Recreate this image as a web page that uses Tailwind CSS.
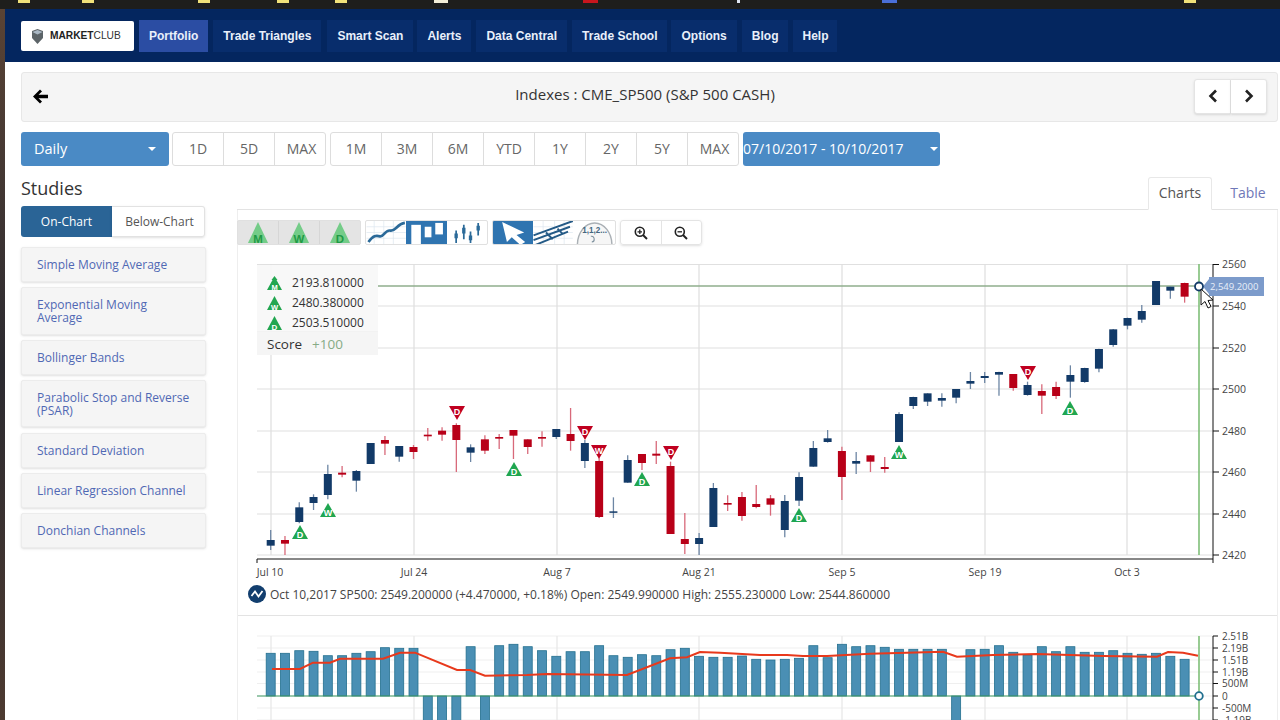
<!DOCTYPE html>
<html lang="en">
<head>
    <meta charset="UTF-8">
    <title>MarketClub Chart</title>
    <script src="https://cdn.jsdelivr.net/npm/@tailwindcss/browser@4"></script>
</head>
<body class="bg-white">
<div class="w-[1280px] h-[720px] overflow-hidden flex flex-col font-['Open_Sans',sans-serif] text-[#444]">
    <!-- browser bookmarks strip -->
    <div class="h-[9px] shrink-0 bg-[#1e1e1c] flex items-start">
        <span class="ml-[18px] w-[12px] h-[3px] bg-[#f1e27a]"></span>
        <span class="ml-[52px] w-[12px] h-[3px] bg-[#f1e27a]"></span>
        <span class="ml-[104px] w-[12px] h-[3px] bg-[#f1e27a]"></span>
        <span class="ml-[67px] w-[12px] h-[3px] bg-[#f1e27a]"></span>
        <span class="ml-[46px] w-[12px] h-[3px] bg-[#f1e27a]"></span>
        <span class="ml-[87px] w-[14px] h-[3px] bg-[#f4efd8]"></span>
        <span class="ml-[135px] w-[15px] h-[3px] bg-[#c8161d]"></span>
        <span class="ml-[139px] w-[3px] h-[3px] bg-[#dfe6f2]"></span>
        <span class="ml-[142px] w-[15px] h-[3px] bg-[#4a6fd8]"></span>
        <span class="ml-[287px] w-[12px] h-[3px] bg-[#f1e27a]"></span>
    </div>
    <div class="flex flex-1 min-h-0">
        <div class="w-[5px] shrink-0 bg-gradient-to-b from-[#5a4334] via-[#2b2a30] to-[#4d3a30]"></div>
        <div class="flex-1 min-w-0">
            <!-- Navigation -->
            <nav class="h-[53px] bg-[#04265f] flex items-center pl-[16px] pt-[1px] font-['Liberation_Sans',sans-serif] text-[12px] font-bold text-[#e9f0fb]">
                <div class="w-[113px] h-[30px] bg-white rounded-[2px] flex items-center pl-[10px] mr-[5px]">
                    <svg class="w-[13px] h-[15px]" viewBox="0 0 13 15"><path d="M1 2 L6.5 0 L12 2 L12 9 L6.5 15 L1 9 Z" fill="#5c6468"/><path d="M1.5 3 L6.5 1 L11.5 3 L6.5 5.5 Z" fill="#a9b7c4"/></svg>
                    <span class="ml-[6px] text-[10.200px] text-[#222]">MARKET<span class="font-normal text-[#333]">CLUB</span></span>
                </div>
                <a class="h-[32px] px-[10px] flex items-center bg-[#2b4da3]">Portfolio</a>
                <a class="h-[32px] px-[10px] ml-[5px] flex items-center bg-[#082d6c]">Trade Triangles</a>
                <a class="h-[32px] px-[10px] ml-[6px] flex items-center bg-[#082d6c]">Smart Scan</a>
                <a class="h-[32px] px-[10px] ml-[4px] flex items-center bg-[#082d6c]">Alerts</a>
                <a class="h-[32px] px-[10px] ml-[5px] flex items-center bg-[#082d6c]">Data Central</a>
                <a class="h-[32px] px-[10px] ml-[5px] flex items-center bg-[#082d6c]">Trade School</a>
                <a class="h-[32px] px-[10px] ml-[4px] flex items-center bg-[#082d6c]">Options</a>
                <a class="h-[32px] px-[10px] ml-[5px] flex items-center bg-[#082d6c]">Blog</a>
                <a class="h-[32px] px-[9px] ml-[5px] flex items-center bg-[#082d6c]">Help</a>
            </nav>

            <div class="pl-[16px] pr-[2px]">
                <!-- Title panel -->
                <div class="mt-[10px] h-[50px] bg-[#f5f5f5] border border-[#e7e7e7] rounded-[3px] flex items-center relative pr-[10px]">
                    <svg class="ml-[10px] mb-[2px] w-[17px] h-[15px]" viewBox="0 0 17 15"><path d="M8 0.5 L1 7.5 L8 14.5 L10 12.5 L6.5 9.3 L16 9.3 L16 5.7 L6.5 5.7 L10 2.5 Z" fill="#000"/></svg>
                    <h1 class="flex-1 text-center text-[15px] text-[#333] mb-[6px] pl-[51px] pr-[4px]">Indexes : CME_SP500 (S&amp;P 500 CASH)</h1>
                    <div class="flex mb-[2px]">
                        <button class="w-[37px] h-[35px] bg-white border border-[#e4e4e4] rounded-l-[3px] flex items-center justify-center shadow-sm">
                            <svg class="w-[10px] h-[14px]" viewBox="0 0 10 14"><path d="M8 1.5 L2.5 7 L8 12.5" fill="none" stroke="#222" stroke-width="2.6"/></svg>
                        </button>
                        <button class="w-[36px] h-[35px] bg-white border border-[#e4e4e4] border-l-0 rounded-r-[3px] flex items-center justify-center shadow-sm">
                            <svg class="w-[10px] h-[14px]" viewBox="0 0 10 14"><path d="M2 1.5 L7.5 7 L2 12.5" fill="none" stroke="#222" stroke-width="2.6"/></svg>
                        </button>
                    </div>
                </div>

                <!-- Range controls -->
                <div class="mt-[10px] h-[34px] flex text-[14px] text-[#666]">
                    <button class="w-[148px] bg-[#4a8ac5] text-white rounded-[3px] flex items-center pl-[13px] pr-[13px] pb-[1px] justify-between text-[14.5px]">Daily<span class="w-0 h-0 border-x-[4px] border-x-transparent border-t-[4px] border-t-white"></span></button>
                    <div class="ml-[3px] flex border border-[#ddd] rounded-[3px] divide-x divide-[#ddd]">
                        <span class="w-[51px] pb-[1px] flex items-center justify-center">1D</span>
                        <span class="w-[51px] pb-[1px] flex items-center justify-center">5D</span>
                        <span class="w-[50px] pb-[1px] pl-[3px] flex items-center justify-center">MAX</span>
                    </div>
                    <div class="ml-[4px] flex border border-[#ddd] rounded-[3px] divide-x divide-[#ddd]">
                        <span class="w-[51px] pb-[1px] flex items-center justify-center">1M</span>
                        <span class="w-[51px] pb-[1px] flex items-center justify-center">3M</span>
                        <span class="w-[51px] pb-[1px] flex items-center justify-center">6M</span>
                        <span class="w-[51px] pb-[1px] flex items-center justify-center">YTD</span>
                        <span class="w-[51px] pb-[1px] flex items-center justify-center">1Y</span>
                        <span class="w-[51px] pb-[1px] flex items-center justify-center">2Y</span>
                        <span class="w-[51px] pb-[1px] flex items-center justify-center">5Y</span>
                        <span class="w-[50px] pb-[1px] pl-[3px] flex items-center justify-center">MAX</span>
                    </div>
                    <button class="ml-[4px] w-[197px] bg-[#4a8ac5] text-white rounded-[3px] flex items-center justify-between pr-[2px] pb-[1px] text-[14px]">07/10/2017 - 10/10/2017<span class="w-0 h-0 border-x-[4px] border-x-transparent border-t-[4px] border-t-white"></span></button>
                </div>

                <div class="mt-[11px] flex">
                    <!-- Studies -->
                    <aside class="w-[185px] shrink-0">
                        <h2 class="h-[22px] leading-[22px] text-[18px] text-[#333]">Studies</h2>
                        <div class="mt-[7px] w-[184px] h-[31px] flex text-[12px] rounded-[3px]">
                            <span class="w-[91px] bg-[#2a6496] text-white rounded-l-[3px] flex items-center justify-center">On-Chart</span>
                            <span class="flex-1 pl-[3px] border border-[#e2e2e2] border-l-0 rounded-r-[3px] flex items-center justify-center text-[#555] shadow-sm">Below-Chart</span>
                        </div>
                        <div class="mt-[10px] flex flex-col gap-[5px] text-[12px] leading-[13px] font-medium text-[#5068b4]">
                            <a class="h-[35px] pl-[15px] pr-[12px] flex items-center bg-[#f5f5f5] border border-[#ececec] rounded-[2px] shadow-sm">Simple Moving Average</a>
                            <a class="h-[48px] pl-[15px] pr-[12px] flex items-center bg-[#f5f5f5] border border-[#ececec] rounded-[2px] shadow-sm">Exponential Moving Average</a>
                            <a class="h-[35px] pl-[15px] pr-[12px] flex items-center bg-[#f5f5f5] border border-[#ececec] rounded-[2px] shadow-sm">Bollinger Bands</a>
                            <a class="h-[47px] mb-[1px] pl-[15px] pr-[12px] flex items-center bg-[#f5f5f5] border border-[#ececec] rounded-[2px] shadow-sm">Parabolic Stop and Reverse (PSAR)</a>
                            <a class="h-[35px] pl-[15px] pr-[12px] flex items-center bg-[#f5f5f5] border border-[#ececec] rounded-[2px] shadow-sm">Standard Deviation</a>
                            <a class="h-[35px] pl-[15px] pr-[12px] flex items-center bg-[#f5f5f5] border border-[#ececec] rounded-[2px] shadow-sm">Linear Regression Channel</a>
                            <a class="h-[35px] pl-[15px] pr-[12px] flex items-center bg-[#f5f5f5] border border-[#ececec] rounded-[2px] shadow-sm">Donchian Channels</a>
                        </div>
                    </aside>

                    <!-- Chart pane -->
                    <section class="ml-[31px] w-[1041px] shrink-0">
                        <div class="h-[33px] flex justify-end border-b border-[#e3e3e3] text-[14px]">
                            <span class="w-[64px] h-[33px] pb-[2px] border border-[#e8e8e8] border-b-white rounded-t-[3px] flex items-center justify-center text-[#555] bg-white">Charts</span>
                            <span class="w-[66px] pb-[2px] pl-[6px] flex items-center justify-center text-[#6f78b8]">Table</span>
                        </div>
                        <div class="border-l border-r border-[#eeeeee] relative">
                            <!-- Chart toolbar -->
                            <div class="pt-[10px] h-[40px] flex -ml-[1px]">
                                <div class="w-[124px] h-[25px] bg-[#e4e4e4] border border-[#e0e0e0] rounded-[2px] flex divide-x divide-[#d6d6d6]">
                                    <svg class="flex-1 h-full" viewBox="0 0 41 24"><path d="M20.500 1 L31 23 L10 23 Z" fill="#74cc88"/><text x="20.500" y="22.500" text-anchor="middle" font-family="Liberation Sans" font-weight="700" font-size="12" fill="#1f9a45">M</text></svg>
                                    <svg class="flex-1 h-full" viewBox="0 0 41 24"><path d="M20.500 1 L31 23 L10 23 Z" fill="#74cc88"/><text x="20.500" y="22.500" text-anchor="middle" font-family="Liberation Sans" font-weight="700" font-size="12" fill="#1f9a45">W</text></svg>
                                    <svg class="flex-1 h-full" viewBox="0 0 41 24"><path d="M20.500 1 L31 23 L10 23 Z" fill="#74cc88"/><text x="20.500" y="22.500" text-anchor="middle" font-family="Liberation Sans" font-weight="700" font-size="12" fill="#1f9a45">D</text></svg>
                                </div>
                                <div class="ml-[4px] w-[123px] h-[25px] border border-[#e0e0e0] rounded-[2px] flex overflow-hidden">
                                    <svg class="w-[41px] h-full" viewBox="0 0 41 24"><path d="M0 6H41M0 12H41M0 18H41M8 0V24M18 0V24M28 0V24" stroke="#dbe6ee" stroke-width="0.7"/><path d="M2 22 C7 15 10 15 14 16 C18 17 19 9 25 10 C30 11 32 3 40 2" fill="none" stroke="#2b6a99" stroke-width="2.800"/></svg>
                                    <svg class="w-[41px] h-full bg-[#2f74b0]" viewBox="0 0 41 24"><rect x="5" y="4" width="10" height="20" fill="#fff"/><rect x="19" y="6" width="7" height="11" fill="#fff"/><rect x="30" y="2" width="8" height="12" fill="#fff"/></svg>
                                    <svg class="w-[41px] h-full" viewBox="0 0 41 24"><path d="M9 10V23M17 4V19M24 11V23M32 2V15" stroke="#2b6a99" stroke-width="1.800"/><path d="M9 13V18M17 7V13M24 15V20M32 5V10" stroke="#2b6a99" stroke-width="3.500"/></svg>
                                </div>
                                <div class="ml-[4px] w-[124px] h-[25px] border border-[#e0e0e0] rounded-[2px] flex overflow-hidden">
                                    <svg class="w-[41px] h-full bg-[#2f74b0]" viewBox="0 0 41 24"><path d="M9 1 L32 12 L24 14.500 L33 22 L28 25 L19 17 L14 22 Z" fill="#fff"/></svg>
                                    <svg class="w-[41px] h-full" viewBox="0 0 41 24"><path d="M0 6H41M0 12H41M0 18H41M10 0V24M22 0V24M32 0V24" stroke="#dbe6ee" stroke-width="0.7"/><path d="M0 15 L41 0 M0 20 L38 6 M2 25 L36 11 M13 12 L20 19 M25 8 L31 14" fill="none" stroke="#245a86" stroke-width="2"/></svg>
                                    <svg class="w-[42px] h-full" viewBox="0 0 42 24"><path d="M3 25 A18 23 0 0 1 39 25" fill="#f6f6f6" stroke="#aab0b5" stroke-width="1.500"/><text x="21" y="12" text-anchor="middle" font-family="Liberation Sans" font-weight="700" font-size="8.500" fill="#44667f">1,1,2...</text><path d="M18 22 A3 3 0 1 0 17 16" fill="none" stroke="#7f929f" stroke-width="1.100"/></svg>
                                </div>
                                <div class="ml-[4px] w-[82px] h-[25px] border border-[#e4e4e4] rounded-[3px] flex divide-x divide-[#e4e4e4] shadow-sm">
                                    <span class="flex-1 flex items-center justify-center">
                                        <svg class="w-[14px] h-[14px]" viewBox="0 0 14 14"><circle cx="5.800" cy="5.800" r="4.500" fill="none" stroke="#222" stroke-width="1.6"/><path d="M9 9L13 13" stroke="#222" stroke-width="2"/><path d="M3.500 5.800H8M5.800 3.500V8" stroke="#222" stroke-width="1.3"/></svg>
                                    </span>
                                    <span class="flex-1 flex items-center justify-center">
                                        <svg class="w-[14px] h-[14px]" viewBox="0 0 14 14"><circle cx="5.800" cy="5.800" r="4.500" fill="none" stroke="#222" stroke-width="1.6"/><path d="M9 9L13 13" stroke="#222" stroke-width="2"/><path d="M3.500 5.800H8" stroke="#222" stroke-width="1.3"/></svg>
                                    </span>
                                </div>
                            </div>

                            <!-- Price chart -->
                            <svg id="price" class="block" width="1039" height="335" viewBox="238 250 1039 335"></svg>

                            <!-- Trade triangle legend -->
                            <div class="absolute left-[19px] top-[55px] w-[121px] bg-[#f8f8f8]/95 text-[12px] text-[#333]">
                                <div class="pl-[10px] pt-[10px] flex flex-col gap-[4px]">
                                    <div class="h-[16px] flex items-center gap-[10px]"><svg class="w-[15px] h-[14px]" viewBox="0 0 15 14"><path d="M7.500 0 L10.500 4 L9.500 4 L15 14 L0 14 L5.500 4 L4.500 4 Z" fill="#22a650"/><text x="7.500" y="13.500" text-anchor="middle" font-family="Liberation Sans" font-weight="700" font-size="7.500" fill="#fff">M</text></svg>2193.810000</div>
                                    <div class="h-[16px] flex items-center gap-[10px]"><svg class="w-[15px] h-[14px]" viewBox="0 0 15 14"><path d="M7.500 0 L15 14 L0 14 Z" fill="#22a650"/><text x="7.500" y="13.500" text-anchor="middle" font-family="Liberation Sans" font-weight="700" font-size="7.500" fill="#fff">W</text></svg>2480.380000</div>
                                    <div class="h-[16px] flex items-center gap-[10px]"><svg class="w-[15px] h-[14px]" viewBox="0 0 15 14"><path d="M7.500 0 L15 14 L0 14 Z" fill="#22a650"/><text x="7.500" y="13.500" text-anchor="middle" font-family="Liberation Sans" font-weight="700" font-size="8" fill="#fff">D</text></svg>2503.510000</div>
                                </div>
                                <div class="h-[24px] pl-[10px] pt-[2px] flex items-center text-[13.500px] border-t border-[#f2f2f2] bg-[#f5f5f5]">Score<span class="ml-[10px] text-[#86ab86]">+100</span></div>
                            </div>

                            <!-- Quote line -->
                            <div class="h-[31px] border-b border-[#e3e3e3] flex items-start pl-[10px] text-[12px] text-[#444] leading-[19px]">
                                <svg class="w-[18px] h-[18px] shrink-0" viewBox="0 0 18 18"><circle cx="9" cy="9" r="9" fill="#123e6e"/><path d="M3.500 11 L7 6.500 L10.500 11.500 L14.500 6" fill="none" stroke="#fff" stroke-width="1.800"/></svg>
                                <span class="ml-[4px] whitespace-nowrap">Oct 10,2017 SP500: 2549.200000 (+4.470000, +0.18%) Open: 2549.990000 High: 2555.230000 Low: 2544.860000</span>
                            </div>

                            <!-- Volume chart -->
                            <svg id="volume" class="block" width="1039" height="105" viewBox="238 616 1039 105"></svg>
                        </div>
                    </section>
                </div>
            </div>
        </div>
    </div>
</div>
<script>
    // [wick top, body top, body bottom, wick bottom, red?] read off the chart, Jul 10 - Aug 23
    var part1 = [
        [420,450,467,480,0],[438,450,461,495,1],[337,352,396,400,0],[313,321,339,360,0],[224,252,315,328,0],
        [228,248,254,262,1],[240,243,272,305,0],[159,159,222,222,0],[138,150,161,195,1],[168,168,200,215,0],
        [165,171,186,207,1],[114,134,139,152,1],[112,122,134,152,1],[100,105,150,246,1],[163,172,188,216,0],
        [136,148,182,192,1],[132,141,146,177,1],[120,120,137,207,1],[148,148,171,192,1],[124,141,146,170,1],
        [117,117,141,147,0],[54,132,153,182,1],[150,159,213,234,0],[205,213,381,384,1],[322,364,368,384,0],
        [196,210,278,278,0],[192,192,219,240,1],[153,191,197,222,1],[215,228,432,432,1],[369,447,462,492,1],
        [429,444,462,495,0],[279,294,411,411,0],[316,339,344,363,1],[306,321,378,392,1]
    ];
    // Aug 24 - Oct 9
    var part2 = [
        [705,762,771,775,1],[735,745,764,797,1],[735,753,840,862,0],[667,681,752,768,0],[573,594,650,650,0],
        [540,565,576,578,0],[590,603,681,750,1],[606,633,641,672,0],[615,616,635,666,1],[621,651,657,668,1],
        [487,492,576,576,0],[440,441,468,477,0],[430,430,455,468,0],[430,444,452,470,0],[417,417,443,460,0],
        [366,393,401,417,0],[366,378,384,399,0],[365,366,374,437,0],[372,372,414,422,1],[395,405,435,437,0],
        [403,423,437,492,1],[395,411,438,447,1],[346,375,395,443,0],[353,354,396,398,0],[296,297,356,367,0],
        [237,238,285,290,0],[203,204,227,238,0],[165,183,209,218,0],[93,93,165,165,0],[110,110,122,146,0],
        [98,99,140,158,1]
    ];
    function cx(i) { return 270.7 + 14.28 * i; }
    var gridX = [271, 414, 557, 699, 842, 985, 1127];
    var labelsX = [['Jul 10',270],['Jul 24',414],['Aug 7',557],['Aug 21',699],['Sep 5',842],['Sep 19',985],['Oct 3',1127]];
    var prices = [[2560,264.5],[2540,306],[2520,348],[2500,389],[2480,431],[2460,472],[2440,514],[2420,555]];
    var font = 'font-family="Open Sans" fill="#444"';
    var s = '';

    prices.forEach(function (p) {
        s += '<line x1="257" x2="1213" y1="' + p[1] + '" y2="' + p[1] + '" stroke="#e0e0e0" stroke-width="1.200"/>';
        s += '<line x1="1213" x2="1219" y1="' + p[1] + '" y2="' + p[1] + '" stroke="#111"/>';
        s += '<text x="1222" y="' + (p[1] + 3.500) + '" font-size="10.500" ' + font + '>' + p[0] + '</text>';
    });
    gridX.forEach(function (x) {
        s += '<line x1="' + x + '" x2="' + x + '" y1="264" y2="555" stroke="#dedede" stroke-width="1.200"/>';
    });
    labelsX.forEach(function (l) {
        s += '<text x="' + l[1] + '" y="576" text-anchor="middle" font-size="10.500" ' + font + '>' + l[0] + '</text>';
    });
    s += '<path d="M257 563V559H1213V563M1213 559V264" fill="none" stroke="#111" stroke-width="1"/>';
    s += '<line x1="378" x2="1199" y1="286" y2="286" stroke="#8fae8c" stroke-width="1.500"/>';
    s += '<line x1="1199" x2="1199" y1="264" y2="555" stroke="#7fbf78" stroke-width="1.600"/>';

    function candle(c, i, off) {
        var x = cx(i), col = c[4] ? '#b80018' : '#123a68', wick = c[4] ? '#d8697a' : '#6d86a4';
        s += '<line x1="' + x + '" x2="' + x + '" y1="' + (off + c[0] / 3) + '" y2="' + (off + c[3] / 3) + '" stroke="' + wick + '" stroke-width="1.300"/>';
        s += '<rect x="' + (x - 4) + '" y="' + (off + c[1] / 3) + '" width="8" height="' + Math.max((c[2] - c[1]) / 3, 1.500) + '" fill="' + col + '"/>';
    }
    part1.forEach(function (c, i) { candle(c, i, 390); });
    part2.forEach(function (c, i) { candle(c, i + 34, 250); });

    // Trade triangles: x, top y, letter, up?
    var marks = [
        [300,525,'D',1],[328,503,'W',1],[514,462,'D',1],[642,472,'D',1],[799,508,'D',1],[899,445,'W',1],[1070,401,'D',1],
        [457,406,'D',0],[585,426,'D',0],[599,445,'W',0],[671,446,'D',0],[1028,366,'D',0]
    ];
    marks.forEach(function (m) {
        var x = m[0], y = m[1], pts, ty, col = m[3] ? '#1fa650' : '#c00020';
        if (m[3]) { pts = x + ',' + y + ' ' + (x + 8) + ',' + (y + 14) + ' ' + (x - 8) + ',' + (y + 14); ty = y + 13; }
        else { pts = (x - 8) + ',' + y + ' ' + (x + 8) + ',' + y + ' ' + x + ',' + (y + 14); ty = y + 8.500; }
        s += '<polygon points="' + pts + '" fill="' + col + '"/>';
        s += '<text x="' + x + '" y="' + ty + '" text-anchor="middle" font-family="Liberation Sans" font-weight="700" font-size="9" fill="#fff">' + m[2] + '</text>';
    });

    // Crosshair value tag and mouse pointer
    s += '<path d="M1203 286.500L1209 279V277H1264V296H1209V294Z" fill="#7c9bcb"/>';
    s += '<text x="1210" y="290" font-family="Open Sans" font-size="9.500" fill="#e8eff9">2,549.2000</text>';
    s += '<circle cx="1199" cy="286.500" r="4" fill="#fff" stroke="#123a68" stroke-width="1.800"/>';
    s += '<path d="M1201 289V305L1205 301.500L1208 308L1211 306.500L1208 300.500L1213 300Z" fill="#fff" stroke="#111" stroke-width="1"/>';
    document.getElementById('price').innerHTML = s;

    // Volume bar tops, by day; 0 means the bar hangs below the zero line
    var tops = [653.3,653.3,650.7,651.3,655.7,655.7,653.3,651.7,647.7,648.3,648.3,0,0,0,646.7,0,645.7,644.3,646.7,650.7,
        656.3,651.7,651.7,645.7,655.7,657.3,654.7,655.7,649.7,648.3,656.3,657.3,657.3,656,659.3,660,659.3,658.3,645.7,657.7,
        644.3,646.7,645.7,647.3,649.3,649.3,649.3,649.3,0,649.7,649.3,645.7,652.3,655.3,646.7,651.7,646.7,652.3,652.3,650.7,
        653.3,654.3,653.3,656.3,659.3];
    var vol = [[636,'2.51B'],[648,'2.19B'],[660,'1.51B'],[672,'1.19B'],[683.500,'500M'],[696,'0'],[708,'-500M'],[720,'-1.19B']];
    var v = '';
    vol.forEach(function (r) {
        v += '<line x1="257" x2="1213" y1="' + r[0] + '" y2="' + r[0] + '" stroke="#efefef" stroke-width="1.200"/>';
        v += '<line x1="1213" x2="1218" y1="' + r[0] + '" y2="' + r[0] + '" stroke="#111"/>';
        v += '<text x="1222" y="' + (r[0] + 3.500) + '" font-size="10" ' + font + '>' + r[1] + '</text>';
    });
    gridX.forEach(function (x) {
        v += '<line x1="' + x + '" x2="' + x + '" y1="636" y2="720" stroke="#e6e6e6" stroke-width="1.200"/>';
    });
    tops.forEach(function (t, i) {
        var x = cx(i) - 4.500, y = t || 696, h = t ? 696 - t : 30;
        v += '<rect x="' + x + '" y="' + y + '" width="9" height="' + h + '" fill="#4a8fb4" stroke="#24708f" stroke-width="0.800"/>';
    });
    v += '<line x1="257" x2="1199" y1="696" y2="696" stroke="#3f9a62" stroke-width="1.200"/>';
    v += '<line x1="1199" x2="1199" y1="636" y2="720" stroke="#7fbf78" stroke-width="1.600"/>';
    v += '<line x1="1213" x2="1213" y1="636" y2="720" stroke="#111"/>';
    v += '<polyline fill="none" stroke="#e8391c" stroke-width="2" points="272,669 300,669 313,662.700 330,662.700 340,658.700 383,658.700 400,652.700 415,652.700 457,670 470,670 485,675.700 527,675 547,674 627,675 670,658.300 687,657.300 700,652 720,652.700 760,655 787,655 803,656 827,656 870,653.700 943,651.700 957,656.700 993,655 1037,654 1103,656 1157,656.700 1168,652 1183,652.700 1198,655.700"/>';
    v += '<circle cx="1199" cy="696" r="3.800" fill="#fff" stroke="#1f6f8f" stroke-width="1.800"/>';
    document.getElementById('volume').innerHTML = v;
</script>
</body>
</html>
